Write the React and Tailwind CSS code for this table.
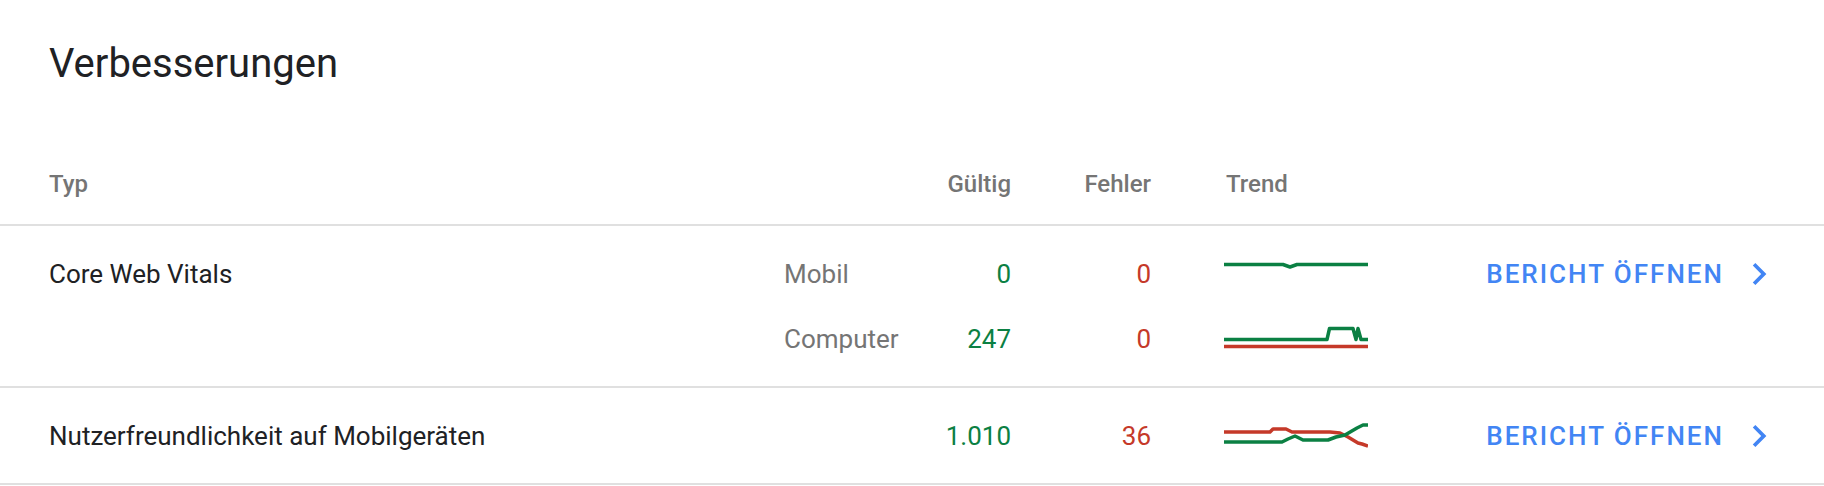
import React from 'react';

const GREEN = '#0b8043';
const RED = '#c53929';

// trend lines, drawn in a 144x65 box that fills one sub-row
const trends = {
  cwvMobile: [{ color: GREEN, d: 'M0 23.5 H59 L66 26 L73 23.5 H144' }],
  cwvDesktop: [
    { color: RED, d: 'M0 40.5 H144' },
    { color: GREEN, d: 'M0 33.5 H103 L105.5 22.5 H129 L132 33.5 L134 22.5 L137 33.5 H144' },
  ],
  mobileUsability: [
    { color: RED, d: 'M0 29 H46 L49 26 H62 L68 29 H106 L116 30 L124 34 L134 40 L138 41 L144 43' },
    { color: GREEN, d: 'M0 39 H58 L64 36 L71 33 L79 37 H104 L112 34 L121 32 L133 25 L139 22 H144' },
  ],
};

function Trend({ lines }) {
  return (
    <svg width="144" height="65" viewBox="0 0 144 65" className="block">
      {lines.map((l, i) => (
        <path key={i} d={l.d} fill="none" stroke={l.color} strokeWidth="3.5" strokeLinejoin="round" />
      ))}
    </svg>
  );
}

function SubRow({ device, valid, errors, trend }) {
  return (
    <div className="flex h-[65px] items-center">
      <div className="w-[140px] text-[#757575]">{device}</div>
      <div className="w-[87px] text-right text-[#0b8043]">{valid}</div>
      <div className="w-[140px] text-right text-[#c53929]">{errors}</div>
      <div className="w-[73px]" />
      <Trend lines={trends[trend]} />
    </div>
  );
}

function ReportButton() {
  return (
    <button className="flex items-center gap-[28px] text-[26px] font-medium uppercase tracking-[2px] text-[#4285f4]">
      Bericht öffnen
      <svg width="15" height="22" viewBox="8.3 6 7.9 12" className="block">
        <path d="M10 6L8.59 7.41 13.17 12l-4.58 4.59L10 18l6-6z" fill="currentColor" />
      </svg>
    </button>
  );
}

const rows = [
  {
    type: 'Core Web Vitals',
    items: [
      { device: 'Mobil', valid: '0', errors: '0', trend: 'cwvMobile' },
      { device: 'Computer', valid: '247', errors: '0', trend: 'cwvDesktop' },
    ],
  },
  {
    type: 'Nutzerfreundlichkeit auf Mobilgeräten',
    items: [{ device: '', valid: '1.010', errors: '36', trend: 'mobileUsability' }],
  },
];

export default function App() {
  return (
    <div className="w-[1824px] h-[486px] bg-white overflow-hidden text-[#202124] font-['Roboto',sans-serif] text-[26px] leading-[32px]">
      <h1 className="pl-[49px] pt-[40px] text-[40px] leading-[48px] font-normal">Verbesserungen</h1>

      {/* Table header */}
      <div className="flex pl-[49px] pr-[57px] pt-[80px] pb-[24px] text-[24px] font-medium text-[#757575] border-b-2 border-[#e0e0e0]">
        <div className="w-[735px]">Typ</div>
        <div className="w-[140px]" />
        <div className="w-[87px] text-right">Gültig</div>
        <div className="w-[140px] text-right">Fehler</div>
        <div className="w-[75px]" />
        <div>Trend</div>
      </div>

      {rows.map((row) => (
        <div key={row.type} className="flex py-[15px] pl-[49px] pr-[57px] border-b-2 border-[#e0e0e0]">
          <div className="w-[735px] h-[65px] flex items-center">{row.type}</div>
          <div className="flex flex-col">
            {row.items.map((it) => (
              <SubRow key={it.trend} {...it} />
            ))}
          </div>
          <div className="flex-1 h-[65px] flex items-center justify-end">
            <ReportButton />
          </div>
        </div>
      ))}
    </div>
  );
}
